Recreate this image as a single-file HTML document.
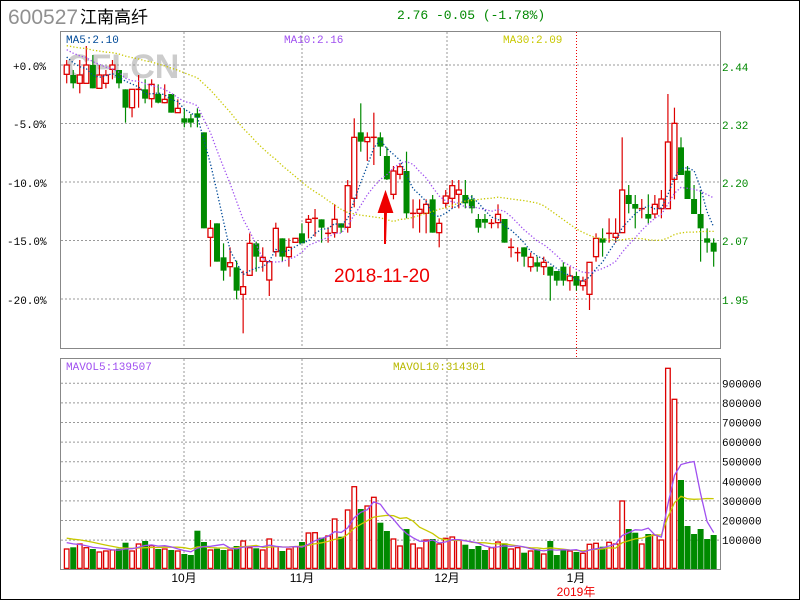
<!DOCTYPE html>
<html><head><meta charset="utf-8"><style>
html,body{margin:0;padding:0;background:#fff;}
svg{display:block;}
.m{font-family:"Liberation Mono",monospace;}
.s{font-family:"Liberation Sans","Noto Sans CJK SC",sans-serif;}
</style></head><body>
<svg id="s" width="800" height="600" xmlns="http://www.w3.org/2000/svg">
<rect x="0.5" y="0.5" width="799" height="599" fill="#fff" stroke="#000"/>
<text class="s" x="8" y="24" font-size="21" fill="#909090">600527</text>
<text x="80" y="23" font-size="17" fill="#000" style="font-family:'Noto Sans CJK SC',sans-serif">江南高纤</text>
<text class="m" x="397" y="19" font-size="13" fill="#008800">2.76 -0.05 (-1.78%)</text>
<text class="s" x="66" y="78" font-size="34" font-weight="bold" fill="#cccccc">CFI.CN</text>
<g id="grid"></g>
<g id="c"></g>
<rect x="60.5" y="31.5" width="660" height="317" fill="none" stroke="#888"/>
<rect x="60.5" y="358.5" width="660" height="211" fill="none" stroke="#888"/>
<text class="m" x="66" y="43" font-size="11" fill="#004a98">MA5:2.10</text>
<text class="m" x="284" y="43" font-size="11" fill="#a050f0">MA10:2.16</text>
<text class="m" x="503" y="43" font-size="11" fill="#c8c800">MA30:2.09</text>
<text class="m" x="66" y="370" font-size="11" fill="#a050f0">MAVOL5:139507</text>
<text class="m" x="393" y="370" font-size="11" fill="#b8b800">MAVOL10:314301</text>
<g font-size="11" fill="#000" class="m">
<text x="13" y="70">+0.0%</text><text x="13" y="128">-5.0%</text><text x="7" y="187">-10.0%</text><text x="7" y="245">-15.0%</text><text x="7" y="304">-20.0%</text>
</g>
<g font-size="11" fill="#008800" class="m">
<text x="722" y="71">2.44</text><text x="722" y="129">2.32</text><text x="722" y="187">2.20</text><text x="722" y="245">2.07</text><text x="722" y="304">1.95</text>
</g>
<g id="vl" font-size="11" fill="#000" class="m"></g>
<g font-size="12" fill="#000" class="s">
<text x="184" y="582" text-anchor="middle">10月</text><text x="302" y="582" text-anchor="middle">11月</text><text x="447" y="582" text-anchor="middle">12月</text><text x="576" y="582" text-anchor="middle">1月</text>
<text x="576" y="596" text-anchor="middle" fill="#ee0000">2019年</text>
</g>
<path d="M385 244 L385 212 L379 212 L385.5 193 L392 212 L386 212 Z" fill="#ee0000" stroke="#ee0000" stroke-width="2"/>
<text class="s" x="334" y="282" font-size="19" fill="#ee0000">2018-11-20</text>
</svg>
<script>
var G=[[3,40,60],[4,90,280],[5,80,500]];
var raw=[
[3,'R',75,103,60,130],[3,'G',105,130,90,145],[3,'R',105,130,60,160],[3,'R',75,130,18,130],[3,'G',75,145,45,145],[3,'R',105,145,75,145],[3,'R',105,130,90,145],[3,'R',75,88,60,118],[3,'G',90,130,90,145],[3,'G',148,203,148,248],
[3,'R',148,203,148,232],[3,'R',148,148,105,203],[3,'G',148,176,118,190],[3,'R',133,176,118,203],[3,'G',162,188,133,190],[3,'R',178,188,133,190],[3,'G',162,218,162,218],[3,'R',205,218,178,218],[3,'G',235,248,205,262],[3,'G',235,248,222,262],
[3,'G',220,233,205,262],[3,'G',277,565,277,565],[3,'R',565,592,540,680],[3,'G',550,665,550,665],[3,'G',652,692,610,722],[3,'R',668,680,622,710],[3,'G',682,752,662,778],[3,'R',740,763,692,880],[3,'R',610,706,580,706],[3,'G',610,650,605,695],
[3,'R',652,664,622,695],[3,'R',665,720,665,768],[3,'R',565,635,548,650],[3,'G',595,650,595,665],[3,'R',622,650,595,680],
[4,'R',445,457,445,457],[4,'G',430,460,400,460],[4,'R',388,397,375,445],[4,'R',385,385,357,440],[4,'G',388,413,388,458],[4,'R',430,430,412,458],[4,'R',388,428,343,443],[4,'G',400,413,400,428],[4,'R',287,412,270,428],[4,'R',142,325,85,352],
[4,'G',127,155,40,185],[4,'R',142,155,127,213],[4,'R',142,142,68,225],[4,'G',142,170,127,198],[4,'G',198,268,172,270],[4,'R',243,313,228,328],[4,'R',230,253,220,268],[4,'G',243,370,185,385],[4,'R',370,370,328,415],[4,'R',358,370,328,428],
[4,'R',343,370,328,430],[4,'G',328,428,315,428],[4,'R',400,428,385,472],[4,'R',318,340,300,355],[4,'R',287,325,270,355],[4,'R',300,313,270,355],[4,'G',315,340,270,355],[4,'G',328,355,315,370],[4,'G',387,413,372,428],[4,'G',387,398,372,415],
[4,'R',400,400,387,415],[4,'R',373,398,343,415],[4,'G',387,458,387,458],
[5,'R',502,502,475,532],[5,'R',518,518,502,545],[5,'G',502,530,502,560],[5,'R',532,560,518,575],[5,'G',547,560,530,575],[5,'R',547,560,530,585],[5,'G',560,587,560,662],[5,'G',573,602,573,617],[5,'G',560,602,547,617],[5,'R',588,602,560,632],
[5,'G',588,617,575,632],[5,'R',603,617,590,632],[5,'R',547,643,547,690],[5,'R',475,530,460,545],[5,'G',475,488,445,530],[5,'R',460,460,415,488],[5,'R',460,472,415,488],[5,'R',330,458,172,458],[5,'G',345,372,315,400],[5,'G',372,386,345,445],
[5,'R',386,386,357,415],[5,'G',402,416,343,430],[5,'R',373,402,345,415],[5,'R',357,386,330,415],[5,'R',186,386,42,386],[5,'R',130,298,83,358],[5,'G',202,285,172,285],[5,'G',272,357,258,357],[5,'G',357,402,315,402],[5,'G',402,445,330,545],
[5,'G',475,488,445,518],[5,'G',488,515,475,560]];
var vol=[20,21.7,25,21.3,20,17,18,19,20.3,26.3,18,25,28,23.3,20,20,19,18,15,14,38.3,27,19,20.3,19,19,23,28,21.3,20.7,19,30,22.3,18,20,22.3,27,36,
36.3,31.3,33,50,32.3,59,82.3,60,63,71.7,46.3,38,30,23,40,25,21,29,30,25,30.7,32,29,24.3,20,23,19,21.3,27,25.7,20,21.3,16.3,18,19.7,15,
28,14,19.7,18,17,15.7,24.7,25.7,22.3,26.7,25,68,40,36.3,25,35,34,29,200.7,169.7,89,43,35,40,30,34];
var out='',grid='';
function X(i){return 66.7+i*6.535;}
[65,123.5,182,240.5,299].forEach(function(y){grid+='<line x1="61" x2="720" y1="'+y+'" y2="'+y+'" stroke="#999" stroke-dasharray="2,2"/>';});
[184,302,447].forEach(function(x){grid+='<line x1="'+x+'" x2="'+x+'" y1="32" y2="348" stroke="#999" stroke-dasharray="2,2"/>';grid+='<line x1="'+x+'" x2="'+x+'" y1="359" y2="569" stroke="#999" stroke-dasharray="2,2"/>';});
grid+='<line x1="576.5" x2="576.5" y1="32" y2="358" stroke="#ee0000" stroke-dasharray="1,2"/>';
var vl='';
for(var k=0;k<9;k++){var y=383.3+19.6*k;grid+='<line x1="61" x2="720" y1="'+y+'" y2="'+y+'" stroke="#999" stroke-dasharray="2,2"/>';vl+='<text x="722" y="'+(y+4)+'">'+((9-k)*100000)+'</text>';}
document.getElementById('grid').innerHTML=grid;
document.getElementById('vl').innerHTML=vl;
var closes=[];
raw.forEach(function(r,i){
 var g=G[r[0]-3],oy=g[1];
 var t=oy+r[2]/3,b=oy+r[3]/3,h=oy+r[4]/3,l=oy+r[5]/3,x=X(i);
 var red=r[1]=='R',col=red?'#dd0000':'#008a00';
 closes.push(red?t:b);
 out+='<line x1="'+x+'" x2="'+x+'" y1="'+h+'" y2="'+l+'" stroke="'+col+'" stroke-width="1.2"/>';
 if(b-t<1.5){out+='<line x1="'+(x-3)+'" x2="'+(x+3)+'" y1="'+t+'" y2="'+t+'" stroke="'+col+'" stroke-width="1.5"/>';}
 else if(red){out+='<rect x="'+(x-2.5)+'" y="'+t+'" width="5" height="'+(b-t)+'" fill="#fff" stroke="'+col+'" stroke-width="1.3"/>';}
 else{out+='<rect x="'+(x-3)+'" y="'+t+'" width="6" height="'+(b-t)+'" fill="'+col+'"/>';}
 var vh=vol[i],vy=569-vh;
 if(red)out+='<rect x="'+(x-2.3)+'" y="'+vy+'" width="4.6" height="'+(vh-0.6)+'" fill="#fff" stroke="#dd0000" stroke-width="1.3"/>';
 else out+='<rect x="'+(x-3)+'" y="'+vy+'" width="6" height="'+vh+'" fill="#008a00"/>';
});
function ma(arr,n,seed){var a=[];for(var j=0;j<n;j++)a.push(seed);a=a.concat(arr);var r=[];for(var i=0;i<arr.length;i++){var s=0;for(var j=0;j<n;j++)s+=a[i+n-j];r.push(s/n);}return r;}
function line(vals,col,dash){var d='';vals.forEach(function(v,i){d+=(i?'L':'M')+X(i).toFixed(1)+' '+v.toFixed(1);});return '<path d="'+d+'" fill="none" stroke="'+col+'" stroke-width="1.3" '+(dash?'stroke-dasharray="1.3,2"':'')+'/>';}
out+=line(ma(closes,30,45),'#c8c800',1);
out+=line(ma(closes,10,48),'#a050f0',1);
out+=line(ma(closes,5,55),'#004a98',1);
var vm5=ma(vol,5,28).map(function(h){return 569-h;}),vm10=ma(vol,10,32).map(function(h){return 569-h;});
out+=line(vm10,'#c8c800',0);
out+=line(vm5,'#a050f0',0);
document.getElementById('c').innerHTML=out;
</script>
</body></html>
